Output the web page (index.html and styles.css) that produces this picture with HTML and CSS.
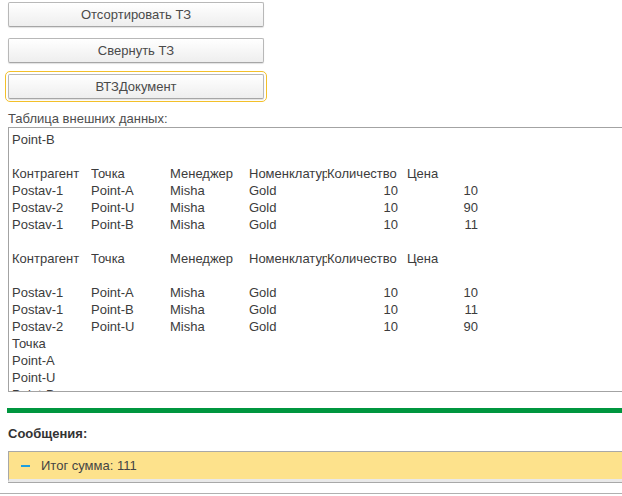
FILE: index.html
```html
<!DOCTYPE html>
<html lang="ru">
<head>
<meta charset="utf-8">
<link rel="stylesheet" href="styles.css">
</head>
<body>
<div class="page">
  <div class="buttons">
    <button class="btn">Отсортировать ТЗ</button>
    <button class="btn">Свернуть ТЗ</button>
    <button class="btn focused">ВТЗДокумент</button>
  </div>
  <div class="label">Таблица внешних данных:</div>
  <div class="textbox">
    <div class="line">Point-B</div>
    <div class="line"></div>
    <div class="row"><span>Контрагент</span><span>Точка</span><span>Менеджер</span><span>Номенклатура</span><span>Количество</span><span>Цена</span></div>
    <div class="row"><span>Postav-1</span><span>Point-A</span><span>Misha</span><span>Gold</span><span class="num">10</span><span class="num">10</span></div>
    <div class="row"><span>Postav-2</span><span>Point-U</span><span>Misha</span><span>Gold</span><span class="num">10</span><span class="num">90</span></div>
    <div class="row"><span>Postav-1</span><span>Point-B</span><span>Misha</span><span>Gold</span><span class="num">10</span><span class="num">11</span></div>
    <div class="line"></div>
    <div class="row"><span>Контрагент</span><span>Точка</span><span>Менеджер</span><span>Номенклатура</span><span>Количество</span><span>Цена</span></div>
    <div class="line"></div>
    <div class="row"><span>Postav-1</span><span>Point-A</span><span>Misha</span><span>Gold</span><span class="num">10</span><span class="num">10</span></div>
    <div class="row"><span>Postav-1</span><span>Point-B</span><span>Misha</span><span>Gold</span><span class="num">10</span><span class="num">11</span></div>
    <div class="row"><span>Postav-2</span><span>Point-U</span><span>Misha</span><span>Gold</span><span class="num">10</span><span class="num">90</span></div>
    <div class="line">Точка</div>
    <div class="line">Point-A</div>
    <div class="line">Point-U</div>
    <div class="line">Point-B</div>
  </div>
  <div class="greenbar"></div>
  <div class="msg-title">Сообщения:</div>
  <div class="msgbox">
    <span class="dash"></span>
    <span class="msg-text">Итог сумма: 111</span>
  </div>
  <div class="bottomline"></div>
</div>
</body>
</html>
```
FILE: styles.css
```css
html, body {
  margin: 0;
  padding: 0;
  background: #ffffff;
  overflow: hidden;
}
body {
  font-family: Arial, "Liberation Sans", sans-serif;
  font-size: 13px;
  color: #3c3c3c;
  width: 622px;
  height: 496px;
}
.page {
  width: 700px;
}
.buttons {
  display: flex;
  flex-direction: column;
  align-items: flex-start;
  gap: 11px;
  padding: 2px 0 0 8px;
}
.btn {
  width: 256px;
  height: 25px;
  border: 1px solid #b8b8b8;
  border-bottom-color: #a6a6a6;
  border-radius: 2px;
  background: linear-gradient(#ffffff, #eeeeee);
  box-shadow: 0 1px 1px rgba(0,0,0,0.12);
  font-family: Arial, "Liberation Sans", sans-serif;
  font-size: 13px;
  color: #4a4a4a;
  padding: 0;
  margin: 0;
}
.btn.focused {
  outline: 1px solid #f3c02a;
  outline-offset: 2px;
}
.label {
  margin: 11px 0 0 8px;
  height: 17px;
  line-height: 17px;
  color: #4d4d4d;
}
.textbox {
  margin: 0 0 0 8px;
  height: 260px;
  border: 1px solid #a3a3a3;
  padding: 3px 0 0 3px;
  overflow: hidden;
  box-sizing: content-box;
}
.line {
  height: 17px;
  line-height: 17px;
  white-space: nowrap;
}
.row {
  display: grid;
  grid-template-columns: 79px 79px 79px 78px 80px 80px;
  height: 17px;
  line-height: 17px;
}
.row span {
  overflow: hidden;
  white-space: nowrap;
}
.row .num {
  text-align: right;
  padding-right: 9px;
}
.greenbar {
  margin: 16px 0 0 7px;
  height: 5px;
  background: #00963f;
}
.msg-title {
  margin: 12px 0 0 8px;
  height: 17px;
  line-height: 17px;
  font-weight: bold;
  color: #333333;
}
.msgbox {
  margin: 9px 0 0 8px;
  height: 27px;
  border: 1px solid #a8a8a8;
  border-bottom: 3px solid #e9e9e9;
  box-shadow: 0 1px 0 #a8a8a8;
  background: #fde28c;
  display: flex;
  align-items: center;
  padding-left: 12px;
}
.dash {
  width: 9px;
  height: 2px;
  background: #1d9fe0;
  margin-right: 11px;
}
.msg-text {
  color: #444444;
}
.bottomline {
  margin-top: 11px;
  height: 1px;
  background: #b0b0b0;
}
```
